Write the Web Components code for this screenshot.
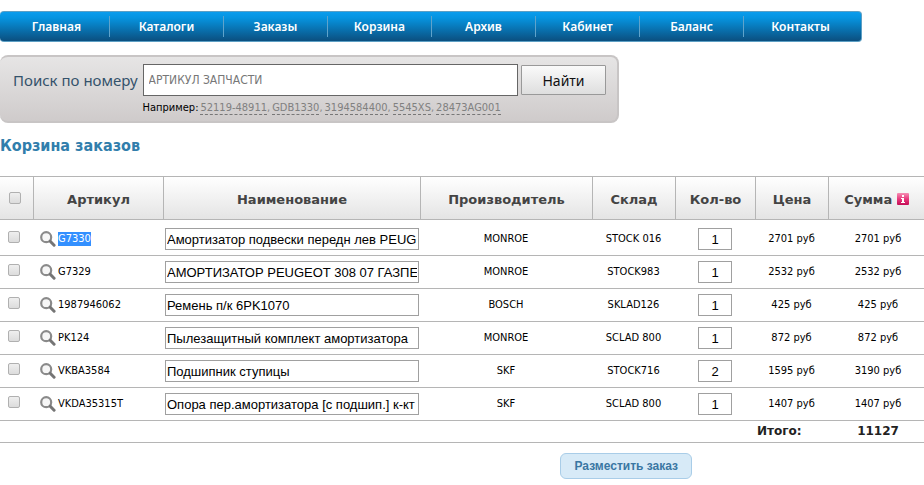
<!DOCTYPE html>
<html lang="ru">
<head>
<meta charset="utf-8">
<title>Корзина заказов</title>
<style>
  body { margin: 0; padding: 11px 0 6px; background: #fff; color: #000; font: 11px/14px "DejaVu Sans Condensed", "Noto Sans", sans-serif; }
  main-menu { margin-right: 62px; }
  part-search { margin: 13px 305px 13px 0; }
  h2 { margin: 0 0 20px; color: #317eac; font-size: 16px; line-height: 20px; }
</style>
</head>
<body>
<main-menu>
  <menu-item href="#home" style="flex-grow:110">Главная</menu-item>
  <menu-item href="#catalogs" style="flex-grow:114">Каталоги</menu-item>
  <menu-item href="#orders">Заказы</menu-item>
  <menu-item href="#cart">Корзина</menu-item>
  <menu-item href="#archive">Архив</menu-item>
  <menu-item href="#cabinet">Кабинет</menu-item>
  <menu-item href="#balance">Баланс</menu-item>
  <menu-item href="#contacts" style="flex-grow:114">Контакты</menu-item>
</main-menu>
<part-search examples="52119-48911 GDB1330 3194584400 5545XS 28473AG001">Поиск по номеру</part-search>
<h2>Корзина заказов</h2>
<order-cart></order-cart>

<script>
class MainMenu extends HTMLElement {
  constructor() {
    super();
    this.attachShadow({ mode: "open" }).innerHTML = `
      <style>
        :host{display:block}
        nav{display:flex;align-items:center;box-sizing:border-box;height:31px;padding-right:4px;border:solid #5d9fc4;border-width:1px 1px 1px 0;border-radius:4px;
          background:linear-gradient(#0b9ced,#0694e0 20%,#0b4f7f);}
      </style>
      <nav><slot></slot></nav>`;
  }
}

class MenuItem extends HTMLElement {
  constructor() {
    super();
    this.attachShadow({ mode: "open" }).innerHTML = `
      <style>
        :host{display:block;flex:104 1 0;border-left:1px solid #5fa3cb;box-sizing:border-box}
        :host(:first-child){border-left:0}
        a{display:block;text-align:center;color:#fff;text-decoration:none;font:600 12px/21px "Noto Sans",sans-serif}
        :host(:first-child) a{padding-left:4px}
        a:hover{text-decoration:underline}
      </style>
      <a><slot></slot></a>`;
  }
  connectedCallback() { this.shadowRoot.querySelector("a").href = this.getAttribute("href"); }
}

class PartSearch extends HTMLElement {
  constructor() { super(); this.attachShadow({ mode: "open" }); }
  connectedCallback() {
    const links = this.getAttribute("examples").split(" ").map((n) => `<span><a href="#${n}">${n}</a></span>`).join("");
    this.shadowRoot.innerHTML = `
      <style>
        :host{display:block}
        form{display:grid;grid-template-columns:auto 1fr 85px;column-gap:3px;row-gap:5px;align-items:center;margin:0;padding:7px 11px 6px 13px;
          border:solid #c8c5c5;border-width:2px 2px 2px 0;border-radius:8px;background:linear-gradient(#e6e5e5,#cfcbcb)}
        label{padding-right:2px;color:#34526b;font:15px/20px "Noto Sans",sans-serif}
        input{box-sizing:border-box;width:100%;height:32px;margin:0;padding:0 5px;border:1px solid #666;background:#fff;font:12px "DejaVu Sans Condensed",sans-serif}
        input::placeholder{color:#777;opacity:1}
        button{height:30px;padding:0;border:1px solid #999;border-radius:1px;background:linear-gradient(#fafafa,#dedede);color:#111;font:14px "Noto Sans",sans-serif}
        .hint{grid-column:2/-1;display:flex;gap:2px;line-height:14px}
        .hint span{color:#888}
        .hint span:not(:last-child)::after{content:","}
        a{color:#808080;text-decoration:none;border-bottom:1px dashed #777}
      </style>
      <form>
        <label for="num"><slot></slot></label>
        <input id="num" type="text" placeholder="АРТИКУЛ ЗАПЧАСТИ">
        <button type="button">Найти</button>
        <div class="hint">Например: ${links}</div>
      </form>`;
  }
}

// magnifier + part number; the "selected" attribute highlights the number
class PartNumber extends HTMLElement {
  constructor() {
    super();
    this.attachShadow({ mode: "open" }).innerHTML = `
      <style>
        :host{display:flex;align-items:center;gap:2px}
        svg{display:block;flex:none}
        :host([selected]) span{background:#3390ff;color:#fff}
      </style>
      <svg width="16" height="16" viewBox="0 0 16 16" fill="none">
        <circle cx="6.2" cy="6.2" r="5" fill="#f6f6f6" stroke="#8a8a8a" stroke-width="2.2"/>
        <path d="M10.2 10.2l3.900 4" stroke="#757575" stroke-width="3" stroke-linecap="round"/>
      </svg>
      <span><slot></slot></span>`;
  }
}

class InfoMark extends HTMLElement {
  constructor() {
    super();
    this.attachShadow({ mode: "open" }).innerHTML = `
      <style>:host{display:inline-block;vertical-align:-1px}svg{display:block}</style>
      <svg width="12" height="12" viewBox="0 0 12 12">
        <defs><linearGradient id="g" x2="0" y2="1"><stop stop-color="#f58fb4"/><stop offset=".5" stop-color="#e8397c"/><stop offset="1" stop-color="#c40d56"/></linearGradient></defs>
        <rect width="12" height="12" rx="1" fill="url(#g)"/>
        <path d="M5 2h2v2H5zM4 5h3v4h1v1H4V9h1V6H4z" fill="#fff"/>
      </svg>`;
  }
}

class OrderCart extends HTMLElement {
  constructor() {
    super();
    this.attachShadow({ mode: "open" });
    this.items = [
      ["G7330", "Амортизатор подвески передн лев PEUGEOT 308", "MONROE", "STOCK 016", 1, 2701],
      ["G7329", "АМОРТИЗАТОР PEUGEOT 308 07 ГАЗПЕР", "MONROE", "STOCK983", 1, 2532],
      ["1987946062", "Ремень п/к 6PK1070", "BOSCH", "SKLAD126", 1, 425],
      ["PK124", "Пылезащитный комплект амортизатора", "MONROE", "SCLAD 800", 1, 872],
      ["VKBA3584", "Подшипник ступицы", "SKF", "STOCK716", 2, 1595],
      ["VKDA35315T", "Опора пер.амортизатора [с подшип.] к-кт", "SKF", "SCLAD 800", 1, 1407],
    ];
  }
  connectedCallback() { this.render(); }
  _row([num, name, maker, stock, qty, price], i) {
    return `<tr>
      <td class="pick"><input type="checkbox" aria-label="Выбрать ${num}"></td>
      <td><part-number${i ? "" : " selected"}>${num}</part-number></td>
      <td class="name"><input type="text" value="${name}" aria-label="Наименование"></td>
      <td>${maker}</td><td>${stock}</td>
      <td><input class="qty" type="text" value="${qty}" aria-label="Кол-во"></td>
      <td>${price} руб</td><td class="sum">${price * qty} руб</td></tr>`;
  }
  render() {
    const total = this.items.reduce((s, r) => s + r[4] * r[5], 0);
    this.shadowRoot.innerHTML = `
      <style>
        *{box-sizing:border-box}
        :host{display:block}
        table{width:100%;table-layout:fixed;border-collapse:separate;border-spacing:0}
        th{height:44px;padding:3px 0 0;border:solid #b5b5b5;border-width:1px 0 1px 1px;background:linear-gradient(#fff,#e4e4e4);color:#444;
          font:bold 13px/16px "DejaVu Sans",sans-serif;white-space:nowrap}
        th:first-child{border-left:0;padding:0 3px 0 0}
        td{padding:5px 0;border-bottom:1px solid #b5b5b5;text-align:center;white-space:nowrap}
        tbody tr:first-child td{padding-top:8px}
        td:nth-child(2){padding-left:7px}
        tbody .name{padding-left:2px;padding-right:1px}
        .sum,tfoot .total{padding-left:4px}
        input{display:block;margin:0 auto}
        input[type=text]{width:100%;height:22px;padding:1px;border:1px solid #a0a0a0;border-radius:0;background:#fff;color:#000;font:13px "Liberation Sans",sans-serif}
        input.qty{width:34px;text-align:center}
        input[type=checkbox]{appearance:none;width:12px;height:12px;border:1px solid #b0b0b0;border-radius:2px;background:linear-gradient(#efefef,#dcdcdc)}
        input[type=checkbox]:checked{background:#317eac}
        .pick{padding-right:5px;padding-bottom:9px}
        tfoot td{height:22px;padding:0;color:#222;font:bold 12px/21px "DejaVu Sans",sans-serif}
        tfoot .label{text-align:left;padding-left:2px}
        .actions{display:flex;justify-content:flex-end;padding:10px 232px 0 0}
        button{height:26px;padding:0 13px;border:1px solid #a9cde8;border-radius:6px;background:#d7eaf7;color:#3a77a3;font:bold 12px "Liberation Sans",sans-serif}
      </style>
      <table>
        <colgroup><col style="width:33px"><col style="width:130px"><col><col style="width:172px"><col style="width:83px"><col style="width:80px"><col style="width:73px"><col style="width:96px"></colgroup>
        <thead><tr>
          <th><input type="checkbox" aria-label="Выбрать все"></th><th>Артикул</th><th>Наименование</th><th>Производитель</th>
          <th>Склад</th><th>Кол-во</th><th>Цена</th><th>Сумма <info-mark></info-mark></th>
        </tr></thead>
        <tbody>${this.items.map(this._row).join("")}</tbody>
        <tfoot><tr><td colspan="6"></td><td class="label">Итого:</td><td class="total">${total}</td></tr></tfoot>
      </table>
      <div class="actions"><button type="button">Разместить заказ</button></div>`;
  }
}

customElements.define("main-menu", MainMenu);
customElements.define("menu-item", MenuItem);
customElements.define("part-search", PartSearch);
customElements.define("part-number", PartNumber);
customElements.define("info-mark", InfoMark);
customElements.define("order-cart", OrderCart);
</script>
</body>
</html>
